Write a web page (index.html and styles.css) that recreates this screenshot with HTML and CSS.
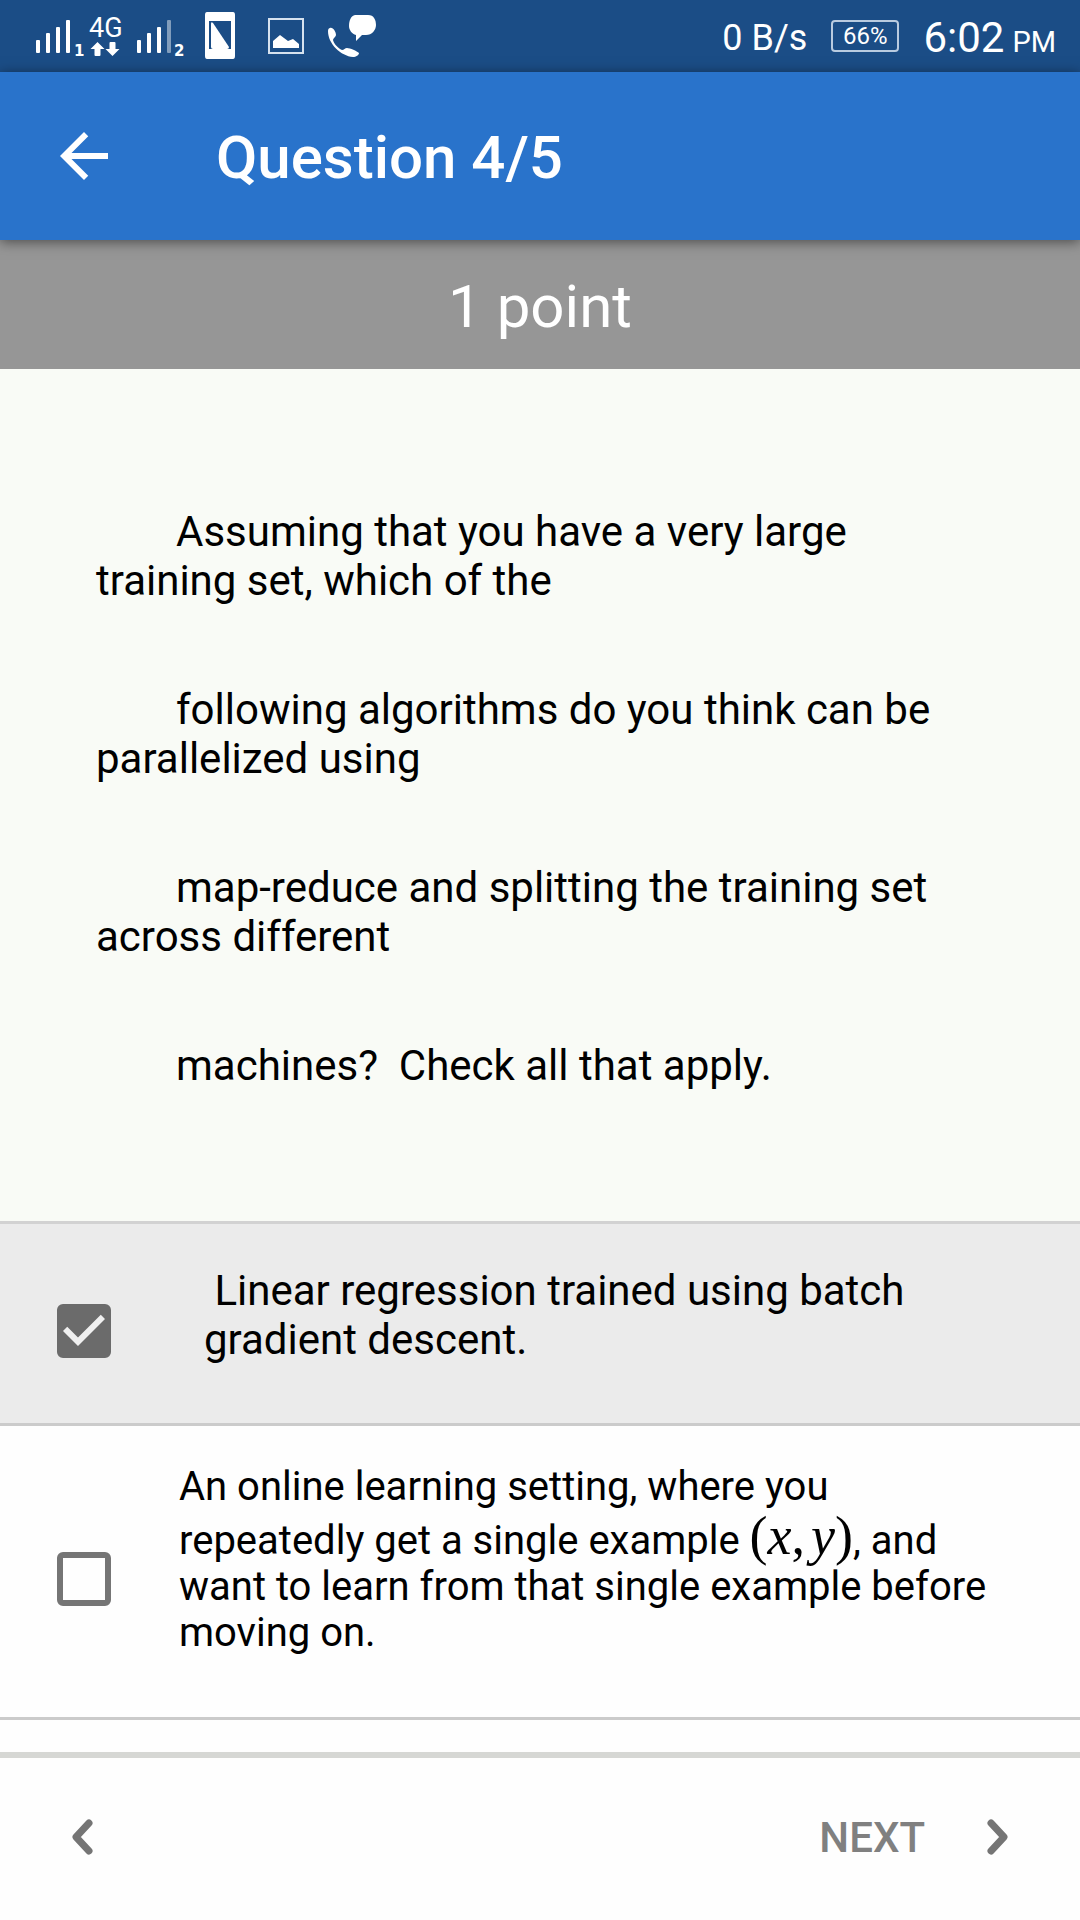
FILE: index.html
```html
<!DOCTYPE html>
<html lang="en">
<head>
<meta charset="utf-8">
<meta name="viewport" content="width=device-width, initial-scale=1">
<title>Question 4/5</title>
<link rel="stylesheet" href="styles.css">
</head>
<body>
<div class="page">
  <div class="status">
    <div class="status-left">
      <svg class="status-cell" viewBox="0 0 50 48" role="img" aria-label="SIM 1 signal">
        <g fill="#fff"><rect x="2" y="28" width="4" height="13" rx="1"/><rect x="12" y="21" width="4" height="20" rx="1"/><rect x="22" y="15" width="4" height="26" rx="1"/><rect x="32" y="8" width="4" height="33" rx="1"/></g>
        <text class="sim" x="40" y="44">1</text>
      </svg>
      <svg class="status-cell" viewBox="0 0 50 48" role="img" aria-label="4G data">
        <text class="network" x="5" y="25">4G</text>
        <path fill="#fff" d="M13.500 30l7 7h-4v6q0 1-1 1h-4q-1 0-1-1v-6h-4z"/>
        <path fill="#fff" d="M28.500 44l-7-7h4v-6q0-1 1-1h4q1 0 1 1v6h4z"/>
      </svg>
      <svg class="status-cell" viewBox="0 0 50 48" role="img" aria-label="SIM 2 signal">
        <g fill="#fff"><rect x="3" y="28" width="4" height="13" rx="1"/><rect x="13" y="21" width="4" height="20" rx="1"/><rect x="23" y="15" width="4" height="26" rx="1"/><rect x="33" y="8" width="4" height="33" rx="1" opacity=".45"/></g>
        <text class="sim" x="40" y="44">2</text>
      </svg>
      <div class="notices">
        <svg class="notice" viewBox="0 0 66 48" role="img" aria-label="SIM toolkit">
          <path fill="#fff" fill-rule="evenodd" d="M20 0h26q2 0 2 3v41q0 3-2 3h-26q-2 0-2-3v-41q0-3 2-3zM22 9v28h22v-28z"/>
          <path fill="#fff" d="M24 12q0-3 2-1l16 24q0 2-2 2h-14q-2 0-2-2z"/>
        </svg>
        <svg class="notice" viewBox="0 0 66 48" role="img" aria-label="Picture">
          <rect x="16" y="7" width="34" height="34" fill="none" stroke="#d6e2ef" stroke-width="2"/>
          <path fill="#fff" d="M20 29l7-6 8 6 5-2 6 5v4h-26z"/>
        </svg>
        <svg class="notice" viewBox="0 0 66 48" role="img" aria-label="Call message">
          <path fill="#fff" d="M36 3h13c6 0 8 5 8 10s-4 10-10 10h-4l-6 6v-6c-4-1-7-5-7-9 0-6 2-10 6-11z"/>
          <path fill="#fff" d="M11 16c3-1 6 4 6 7 0 2-3 3-3 5 1 4 5 8 9 10 2 0 3-2 5-2 3 0 10 3 12 5 0 2-3 4-6 4C22 44 9 32 9 19c0-2 1-3 2-3z"/>
        </svg>
      </div>
    </div>
    <div class="status-right">
      <span class="speed">0 B/s</span>
      <span class="battery">66%</span>
      <span class="clock"><span>6:02</span><span class="meridiem">PM</span></span>
    </div>
  </div>

  <header class="appbar">
    <button class="back" type="button" aria-label="Back">
      <svg viewBox="0 0 24 24" width="72" height="72"><path fill="#fff" d="M20 11H7.830l5.590-5.590L12 4l-8 8 8 8 1.410-1.410L7.830 13H20v-2z"/></svg>
    </button>
    <h1>Question 4/5</h1>
  </header>

  <main class="content">
    <p class="points">1 point</p>
    <section class="question">
      <p>Assuming that you have a very large training set, which of the</p>
      <p>following algorithms do you think can be parallelized using</p>
      <p>map-reduce and splitting the training set across different</p>
      <p>machines?&nbsp; Check all that apply.</p>
    </section>

    <div class="option selected">
      <span class="tick">
        <input type="checkbox" id="option-1" checked>
        <svg viewBox="3 3 18 18" aria-hidden="true"><path fill="#f0f0f0" d="M10 17l-5-5 1.410-1.410L10 14.170l7.590-7.590L19 8z"/></svg>
      </span>
      <label class="inset" for="option-1">&nbsp;Linear regression trained using batch gradient descent.</label>
    </div>
    <div class="option">
      <span class="tick"><input type="checkbox" id="option-2"></span>
      <label class="compact" for="option-2">An online learning setting, where you repeatedly get a single example <span class="math">(<i>x</i>,<i class="second">y</i>)</span>, and want to learn from that single example before moving on.</label>
    </div>
  </main>

  <footer class="pager">
    <button type="button" aria-label="Previous">
      <svg viewBox="0 0 24 40" width="24" height="40"><path d="M18 6L5 20L18 34"/></svg>
    </button>
    <button type="button">
      <span>NEXT</span>
      <svg viewBox="0 0 24 40" width="24" height="40"><path d="M6 6L19 20L6 34"/></svg>
    </button>
  </footer>
</div>
</body>
</html>
```
FILE: styles.css
```css
* { box-sizing: border-box; }

body {
  margin: 0;
  font-family: Roboto, "Noto Sans", sans-serif;
  color: #000;
  background: #fefefe;
}

p, h1 { margin: 0; }

button {
  padding: 0;
  border: 0;
  background: none;
  font: inherit;
  color: inherit;
}

svg { display: block; }

.page {
  display: flex;
  flex-direction: column;
  min-height: 100vh;
}

/* Status bar */
.status {
  display: flex;
  justify-content: space-between;
  align-items: center;
  height: 72px;
  padding: 0 24px 0 34px;
  background: #1b4d86;
  color: #fff;
}

.status-left,
.notices { display: flex; }
.notices { margin-left: 3px; }
.status-cell { width: 50px; height: 48px; }
.notice { width: 66px; height: 48px; }

.sim {
  font: 700 15px "DejaVu Sans", sans-serif;
  fill: #fff;
}

.network {
  font-size: 27px;
  font-weight: 400;
  fill: #fff;
}

.status-right {
  display: flex;
  align-items: center;
  gap: 24px;
}

.speed {
  padding-top: 3px;
  font-size: 36px;
}

.battery {
  width: 68px;
  height: 32px;
  border: 2px solid #b9cbe0;
  border-radius: 4px;
  font-size: 24px;
  line-height: 28px;
  text-align: center;
}

.clock {
  display: flex;
  align-items: baseline;
  gap: 8px;
  padding-top: 2px;
  font-size: 42px;
}

.meridiem { font-size: 29px; }

/* App bar */
.appbar {
  display: flex;
  align-items: center;
  gap: 96px;
  height: 168px;
  padding: 0 48px;
  background: #2973cb;
  color: #fff;
  box-shadow: 0 2px 12px rgba(0, 0, 0, .5);
  z-index: 1;
}

.appbar h1 {
  padding-top: 4px;
  font-size: 60px;
  font-weight: 500;
  line-height: 72px;
}

/* Question */
.content { flex: 1; }

.points {
  padding: 31px 0 26px;
  background: #969696;
  color: #fff;
  font-size: 60px;
  line-height: 72px;
  text-align: center;
}

.question {
  display: grid;
  gap: 80px;
  padding: 138px 96px 131px;
  background: #f9fbf6;
  border-bottom: 3px solid #d2d2d2;
  font-size: 42px;
  line-height: 49px;
  text-indent: 80px;
}

/* Answers */
.option {
  display: flex;
  align-items: center;
  padding: 0 84px 0 57px;
  border-bottom: 3px solid #cbcbcb;
}

.selected { background: #ebebeb; }

.tick {
  display: grid;
  flex: none;
  width: 54px;
  padding-top: 14px;
}

.tick input,
.tick svg {
  grid-area: 1 / 1;
  width: 54px;
  height: 54px;
  margin: 0;
  pointer-events: none;
}

.tick input {
  appearance: none;
  border: 6px solid #757575;
  border-radius: 6px;
  pointer-events: auto;
}

.tick input:checked {
  border-color: #6b6b6b;
  background: #6b6b6b;
}

.option label {
  flex: 1;
  font-size: 42px;
  line-height: 49px;
}

.option .inset { padding: 42px 64px 59px 93px; }

.option .compact {
  padding: 38px 0 61px 68px;
  font-size: 40px;
  line-height: 46px;
}

.math {
  display: inline-block;
  font-family: "Liberation Serif", serif;
  font-size: 54px;
  line-height: 52px;
}

.second { margin-left: 6px; }

/* Pager */
.pager {
  display: flex;
  justify-content: space-between;
  align-items: center;
  height: 168px;
  padding: 0 71px 4px;
  border-top: 6px solid #d6d7d4;
  color: #808080;
}

.pager button {
  display: flex;
  align-items: center;
  gap: 60px;
  font-size: 42px;
  font-weight: 500;
}

.pager path {
  fill: none;
  stroke: #757575;
  stroke-width: 7;
  stroke-linecap: round;
  stroke-linejoin: round;
}
```
